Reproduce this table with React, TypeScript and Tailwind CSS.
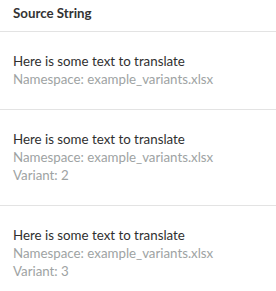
const rows = [
  { text: "Here is some text to translate", ns: "example_variants.xlsx" },
  { text: "Here is some text to translate", ns: "example_variants.xlsx", variant: 2 },
  { text: "Here is some text to translate", ns: "example_variants.xlsx", variant: 3 },
];

export default function App() {
  return (
    <div className="w-[276px] h-[291px] bg-white overflow-hidden font-['Lato',sans-serif] text-[13.3px]">
      <div className="h-[32px] flex items-center px-[13px] pb-[3px] border-b border-[#e3e3e3]">
        <span className="font-bold text-[#333]">Source String</span>
      </div>
      {rows.map((r, i) => (
        <div key={i} className="px-[13px] pt-[20px] pb-[21px] border-b border-[#e3e3e3] leading-[18px]">
          <div className="text-[#2f2f2f]">{r.text}</div>
          <div className="text-[#9ea3a3]">Namespace: {r.ns}</div>
          {r.variant && <div className="text-[#9ea3a3]">Variant: {r.variant}</div>}
        </div>
      ))}
    </div>
  );
}
